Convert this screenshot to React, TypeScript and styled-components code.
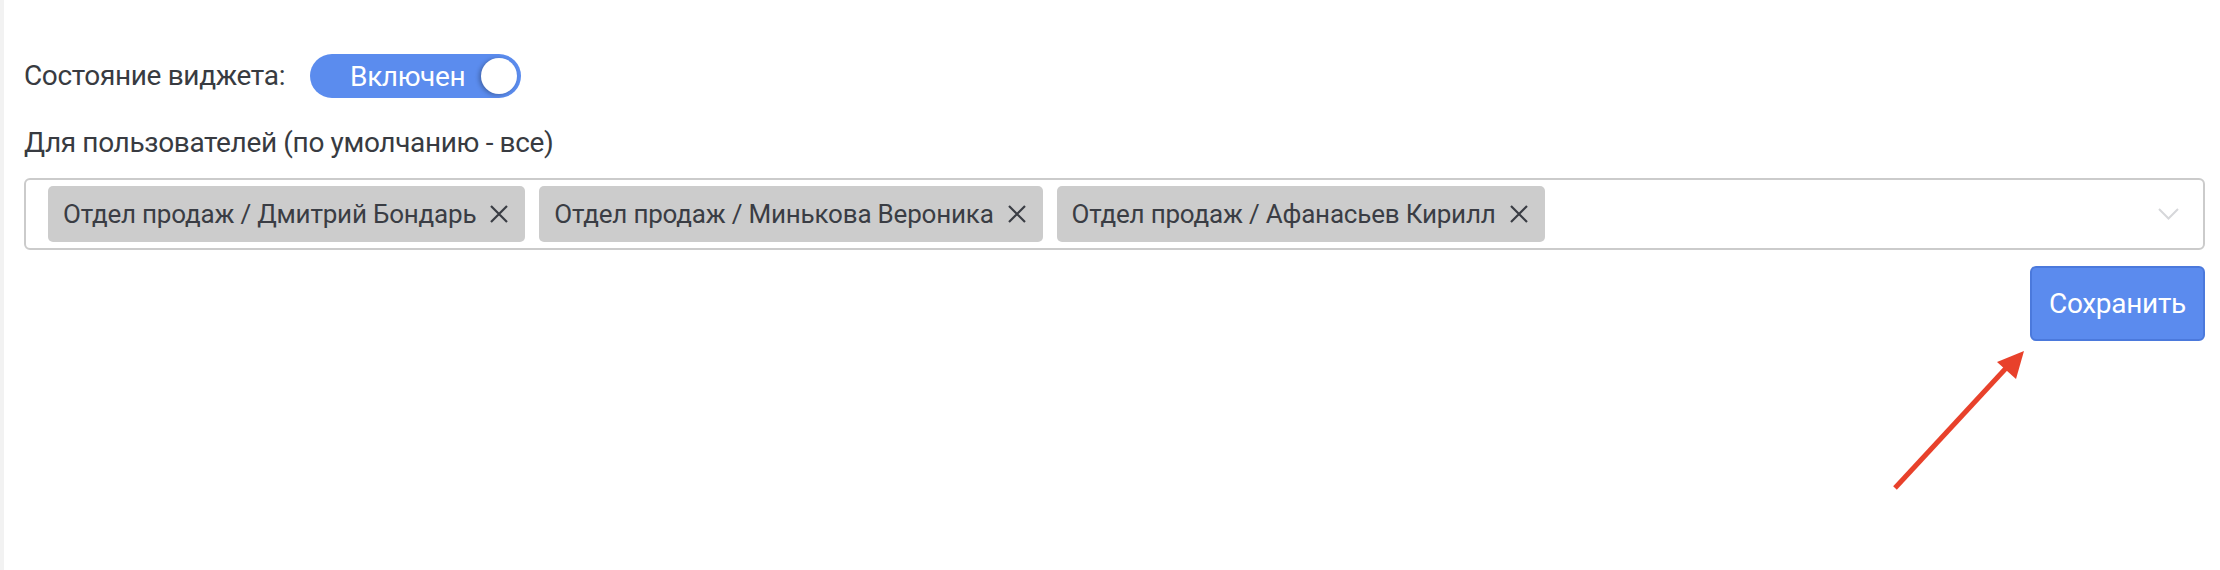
import React from 'react';
import styled, { createGlobalStyle } from 'styled-components';

const GlobalStyle = createGlobalStyle`
  html, body {
    margin: 0;
    padding: 0;
    background: #fff;
  }
  body {
    font-family: Roboto, "Liberation Sans", sans-serif;
    color: #383b41;
  }
`;

const Page = styled.div`
  position: relative;
  box-sizing: border-box;
  min-height: 570px;
  border-left: 4px solid #f2f2f2;
  padding: 54px 15px 0 20px;
  display: flex;
  flex-direction: column;
`;

const StateRow = styled.div`
  display: flex;
  align-items: center;
  gap: 25px;
`;

const Label = styled.span`
  font-size: 28px;
  line-height: 34px;
  letter-spacing: -0.35px;
  color: #383b41;
`;

const FieldLabel = styled(Label)`
  display: block;
  margin-top: 28px;
`;

const Toggle = styled.button<{ $on: boolean }>`
  display: flex;
  align-items: center;
  box-sizing: border-box;
  width: 211px;
  height: 44px;
  padding: 0 4px 0 40px;
  border: none;
  border-radius: 22px;
  background: ${(p) => (p.$on ? '#5b8cee' : '#c9c9c9')};
  color: #fff;
  font-family: inherit;
  font-size: 28px;
  letter-spacing: -0.4px;
  cursor: pointer;
`;

const Knob = styled.span`
  margin-left: auto;
  width: 36px;
  height: 36px;
  border-radius: 50%;
  background: #fff;
  box-shadow: -2px 1px 4px rgba(0, 0, 0, 0.28);
`;

const Select = styled.div`
  display: flex;
  align-items: center;
  box-sizing: border-box;
  margin-top: 18px;
  min-height: 72px;
  padding: 6px 24px 6px 22px;
  border: 2px solid #cbcbcb;
  border-radius: 6px;
`;

const Tags = styled.div`
  display: flex;
  flex-wrap: wrap;
  gap: 14px;
  flex: 1;
`;

const Tag = styled.span`
  display: inline-flex;
  align-items: center;
  gap: 13px;
  height: 56px;
  padding: 0 16px 0 15px;
  border-radius: 5px;
  background: #cccccc;
  font-size: 26px;
  letter-spacing: -0.2px;
  color: #3a3d44;
`;

const RemoveIcon = styled.svg`
  width: 20px;
  height: 18px;
  flex: none;
`;

const Chevron = styled.svg`
  width: 21px;
  height: 12px;
  flex: none;
`;

const SaveButton = styled.button`
  align-self: flex-end;
  margin-top: 16px;
  height: 75px;
  padding: 0 17px;
  border: 2px solid #4b79dc;
  border-radius: 6px;
  background: #5b8bee;
  color: #fff;
  font-family: inherit;
  font-size: 28px;
  letter-spacing: -0.3px;
  cursor: pointer;
`;

const Pointer = styled.svg`
  position: absolute;
  left: -4px;
  top: 0;
  width: 2220px;
  height: 570px;
  pointer-events: none;
`;

const users = [
  'Отдел продаж / Дмитрий Бондарь',
  'Отдел продаж / Минькова Вероника',
  'Отдел продаж / Афанасьев Кирилл',
];

const App: React.FC = () => {
  return (
    <>
      <GlobalStyle />
      <Page>
        <StateRow>
          <Label>Состояние виджета:</Label>
          <Toggle $on>
            Включен
            <Knob />
          </Toggle>
        </StateRow>

        <FieldLabel>Для пользователей (по умолчанию - все)</FieldLabel>
        <Select>
          <Tags>
            {users.map((u) => (
              <Tag key={u}>
                {u}
                <RemoveIcon viewBox="0 0 20 18">
                  <path d="M2 1 L18 17 M18 1 L2 17" stroke="#3a3d44" strokeWidth="2.2" fill="none" />
                </RemoveIcon>
              </Tag>
            ))}
          </Tags>
          <Chevron viewBox="0 0 21 12">
            <path d="M1 1 L10.5 10.5 L20 1" stroke="#d6d7da" strokeWidth="2" fill="none" />
          </Chevron>
        </Select>

        <SaveButton>Сохранить</SaveButton>

        <Pointer viewBox="0 0 2220 570">
          <line x1="1895" y1="488" x2="2008" y2="366" stroke="#e8412b" strokeWidth="5" />
          <polygon points="2024,351 1997,362 2016,379" fill="#e8412b" />
        </Pointer>
      </Page>
    </>
  );
};

export default App;
